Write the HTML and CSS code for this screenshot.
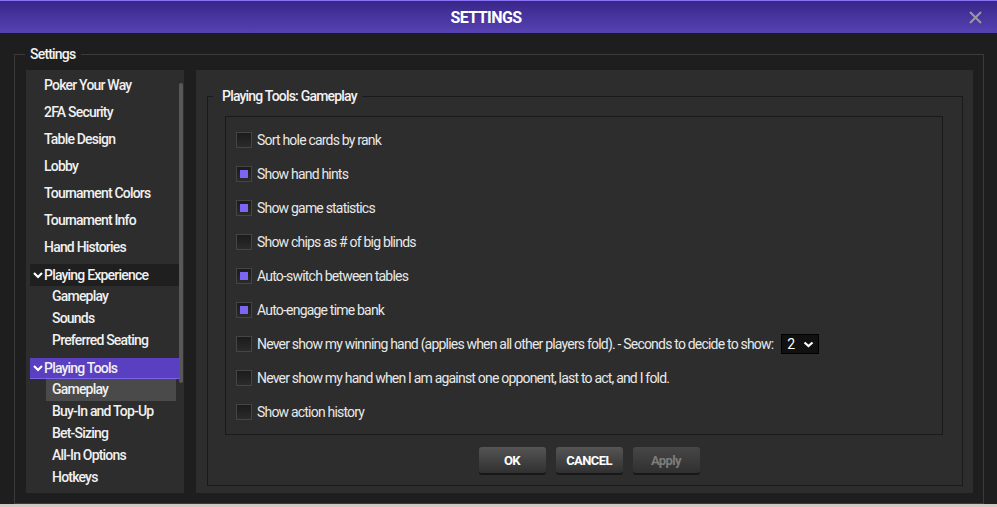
FILE: index.html
```html
<!DOCTYPE html>
<html lang="en">
<head>
    <meta charset="UTF-8">
    <meta name="viewport" content="width=device-width, initial-scale=1.0">
    <title>Settings</title>
    <link rel="stylesheet" href="styles.css">
</head>
<body>
    <div class="window">
        <header class="titlebar">
            <h1 class="title">SETTINGS</h1>
            <button class="close" aria-label="Close">
                <svg width="13" height="13" viewBox="0 0 13 13">
                    <path d="M1 1 L12 12 M12 1 L1 12" stroke="#9a9a9a" stroke-width="2" fill="none"/>
                </svg>
            </button>
        </header>

        <fieldset class="group outer">
            <legend>Settings</legend>
            <div class="layout">
                <nav class="nav">
                    <a class="nav-item">Poker Your Way</a>
                    <a class="nav-item">2FA Security</a>
                    <a class="nav-item">Table Design</a>
                    <a class="nav-item">Lobby</a>
                    <a class="nav-item">Tournament Colors</a>
                    <a class="nav-item">Tournament Info</a>
                    <a class="nav-item">Hand Histories</a>

                    <div class="nav-section">
                        <div class="nav-head">
                            <svg class="chev" width="10" height="7" viewBox="0 0 10 7"><path d="M1 1 L5 5 L9 1" stroke="#fff" stroke-width="2.2" fill="none"/></svg>
                            Playing Experience
                        </div>
                        <a class="nav-sub">Gameplay</a>
                        <a class="nav-sub">Sounds</a>
                        <a class="nav-sub">Preferred Seating</a>
                    </div>

                    <div class="nav-section open">
                        <div class="nav-head">
                            <svg class="chev" width="10" height="7" viewBox="0 0 10 7"><path d="M1 1 L5 5 L9 1" stroke="#fff" stroke-width="2.2" fill="none"/></svg>
                            Playing Tools
                        </div>
                        <a class="nav-sub selected">Gameplay</a>
                        <a class="nav-sub">Buy-In and Top-Up</a>
                        <a class="nav-sub">Bet-Sizing</a>
                        <a class="nav-sub">All-In Options</a>
                        <a class="nav-sub">Hotkeys</a>
                    </div>

                    <div class="scroll-thumb"></div>
                </nav>

                <section class="panel">
                    <fieldset class="group inner">
                        <legend>Playing Tools: Gameplay</legend>
                        <div class="options">
                            <label class="option"><span class="check"></span>Sort hole cards by rank</label>
                            <label class="option"><span class="check on"></span>Show hand hints</label>
                            <label class="option"><span class="check on"></span>Show game statistics</label>
                            <label class="option"><span class="check"></span>Show chips as # of big blinds</label>
                            <label class="option"><span class="check on"></span>Auto-switch between tables</label>
                            <label class="option"><span class="check on"></span>Auto-engage time bank</label>
                            <label class="option"><span class="check"></span>Never show my winning hand (applies when all other players fold). - Seconds to decide to show:
                                <span class="select">2
                                    <svg width="11" height="7" viewBox="0 0 11 7"><path d="M1.5 1.5 L5.5 5 L9.5 1.5" stroke="#fff" stroke-width="2.2" fill="none"/></svg>
                                </span>
                            </label>
                            <label class="option"><span class="check"></span>Never show my hand when I am against one opponent, last to act, and I fold.</label>
                            <label class="option"><span class="check"></span>Show action history</label>
                        </div>
                        <div class="actions">
                            <button class="btn">OK</button>
                            <button class="btn">CANCEL</button>
                            <button class="btn disabled">Apply</button>
                        </div>
                    </fieldset>
                </section>
            </div>
        </fieldset>
    </div>
</body>
</html>
```

FILE: styles.css
```css
body {
    margin: 0;
    background-color: #cfc9c2;
    font-family: Roboto, "Open Sans", sans-serif;
    color: #f0f0f0;
    overflow: hidden;
}

.window {
    width: 997px;
    height: 504px;
    background-color: #1e1e1e;
    overflow: hidden;
}


.titlebar {
    height: 32px;
    border-top: 1px solid #8b72f4;
    background: linear-gradient(#38278a, #5742b2);
    display: flex;
    align-items: center;
}

.title {
    flex: 1;
    margin: 0;
    padding-left: 9px;
    text-align: center;
    font-size: 16px;
    font-weight: 700;
    letter-spacing: -0.6px;
    color: #ffffff;
}

.close {
    width: 24px;
    height: 24px;
    margin-right: 10px;
    padding: 0;
    border: none;
    background: none;
    display: flex;
    align-items: center;
    justify-content: center;
}


.group {
    margin: 0;
    min-width: 0;
}

.group legend {
    font-size: 14px;
    line-height: 18px;
    font-weight: 500;
    letter-spacing: -0.8px;
    color: #f2f2f2;
}

.outer {
    margin: 12px 13px 0 14px;
    padding: 7px 10px 10px 11px;
    border: 1px solid #3a3a3a;
}

.outer legend {
    margin-left: -1px;
    padding: 0 6px 0 5px;
}

.layout {
    display: flex;
    gap: 12px;
    height: 423px;
}


.nav {
    position: relative;
    width: 158px;
    flex-shrink: 0;
    padding-top: 2px;
    background-color: #2d2d2d;
    font-size: 14px;
    font-weight: 500;
    letter-spacing: -0.8px;
    box-sizing: border-box;
}

.nav-item {
    display: block;
    height: 27px;
    line-height: 27px;
    padding-left: 18px;
}

.nav-section {
    margin-top: 3px;
}

.nav-section.open {
    margin-top: 6px;
}

.nav-head {
    display: flex;
    align-items: center;
    height: 22px;
    margin: 0 5px 0 4px;
    padding-left: 3px;
    background-color: #1f1f1f;
}

.open .nav-head {
    height: 20px;
    background-color: #5a3fc0;
    border-bottom: 1px solid #7b63ea;
}

.chev {
    margin-right: 1px;
}

.nav-sub {
    display: block;
    height: 22px;
    line-height: 21px;
    margin: 0 8px 0 20px;
    padding-left: 6px;
}

.nav-sub.selected {
    background-color: #4a4a4a;
}

.scroll-thumb {
    position: absolute;
    top: 13px;
    right: 1px;
    width: 4px;
    height: 300px;
    border-radius: 2px;
    background-color: #585858;
}


.panel {
    flex: 1;
    padding: 17px 10px 7px 11px;
    background-color: #2d2d2d;
}

.inner {
    height: 100%;
    box-sizing: border-box;
    padding: 11px 19px 0 17px;
    border: 1px solid #1a1a1a;
}

.inner legend {
    margin-left: -12px;
    padding: 0 5px 0 9px;
}

.options {
    border: 1px solid #1a1a1a;
    padding: 6px 10px 5px;
    font-size: 14px;
    letter-spacing: -0.8px;
    color: #e8e8e8;
}

.option {
    display: flex;
    align-items: center;
    gap: 5px;
    height: 34px;
}

.check {
    width: 14px;
    height: 14px;
    border: 1px solid #454545;
    background: linear-gradient(#1b1b1b, #2b2b2b);
    display: flex;
    align-items: center;
    justify-content: center;
}

.check.on::after {
    content: "";
    width: 8px;
    height: 8px;
    background-color: #7b66f2;
}

.select {
    display: inline-flex;
    align-items: center;
    gap: 8px;
    height: 18px;
    margin-left: 3px;
    padding: 0 4px 0 5px;
    border: 1px solid #000;
    background-color: #111;
    color: #fff;
    letter-spacing: 0;
}


.actions {
    display: flex;
    justify-content: center;
    gap: 10px;
    margin-top: 12px;
    padding-left: 10px;
}

.btn {
    width: 67px;
    height: 26px;
    border: none;
    border-radius: 3px;
    background: linear-gradient(#555555, #303030);
    box-shadow: 0 2px 0 #171717;
    font-family: Roboto, sans-serif;
    font-size: 13px;
    font-weight: 700;
    letter-spacing: -0.6px;
    color: #ffffff;
    cursor: pointer;
}

.btn.disabled {
    background: linear-gradient(#474747, #303030);
    color: #7c7c7c;
}
```
